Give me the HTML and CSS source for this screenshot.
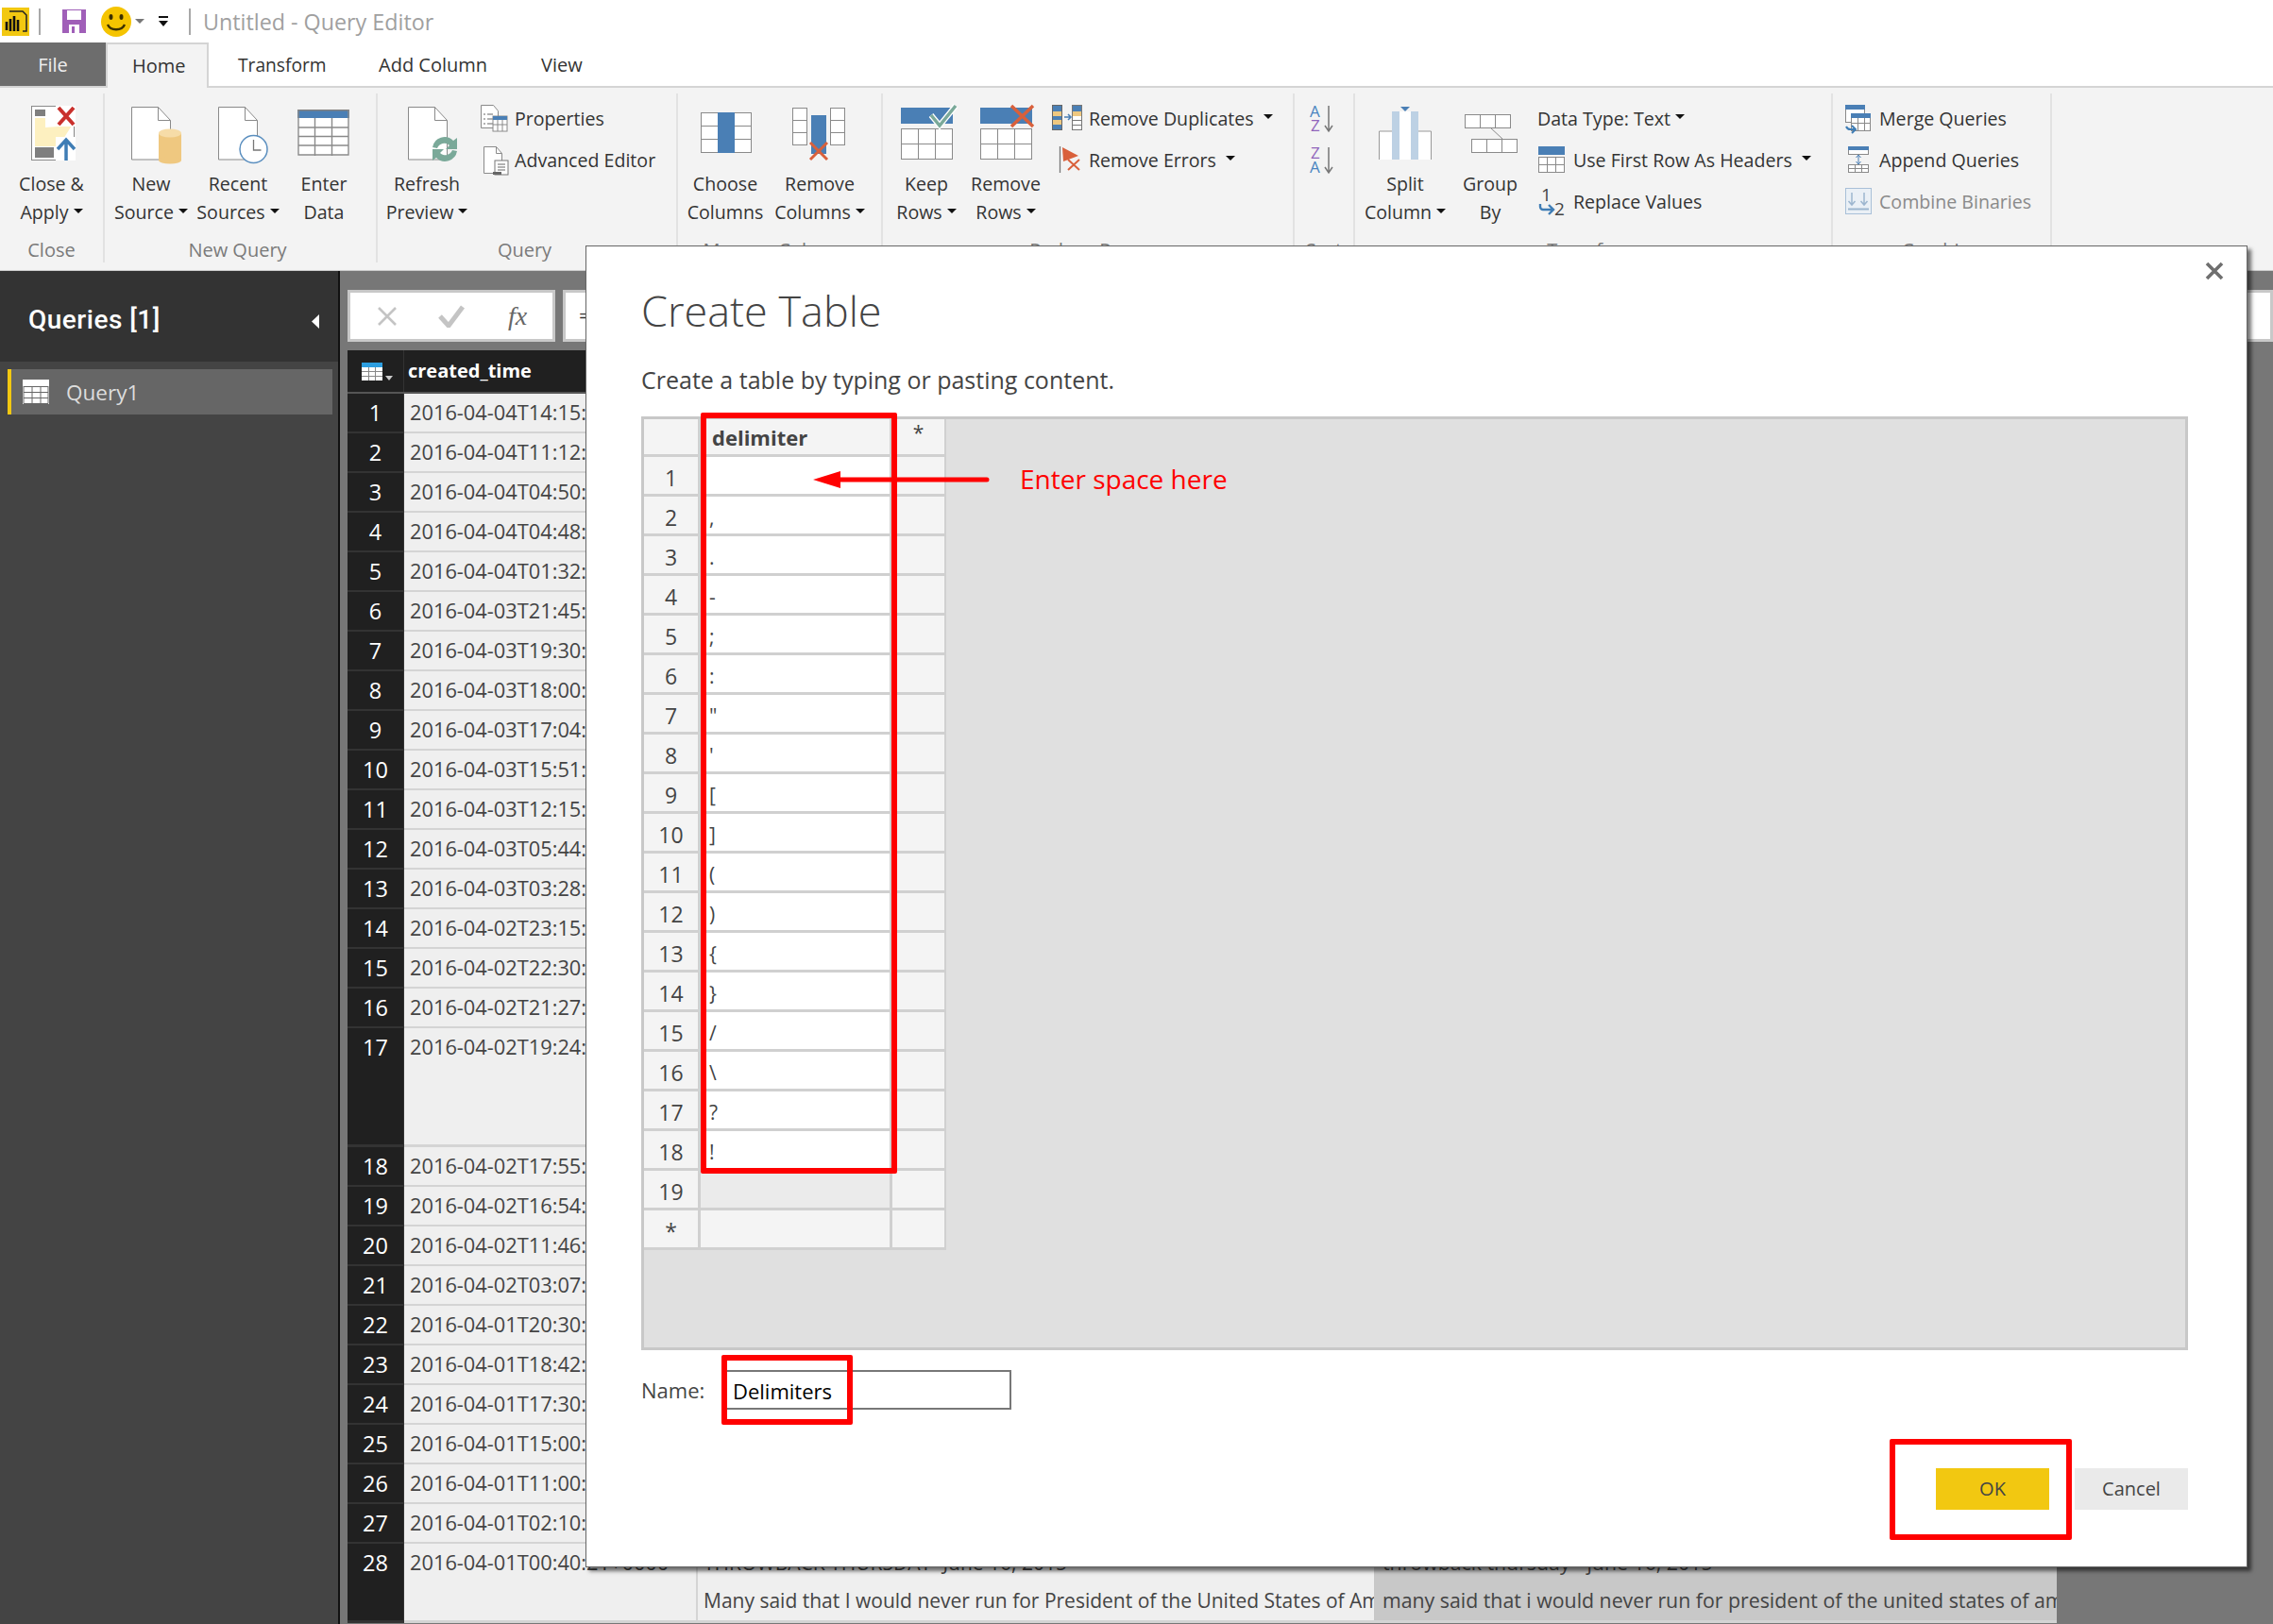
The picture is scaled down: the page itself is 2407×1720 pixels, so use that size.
FILE: index.html
```html
<!DOCTYPE html>
<html lang="en">
<head>
    <meta charset="UTF-8">
    <title>Untitled - Query Editor</title>
    <link rel="stylesheet" href="styles.css">
</head>
<body>
<div class="app">
    <div class="titlebar">
        <svg class="qa-logo" viewBox="0 0 29 30"><rect width="29" height="30" fill="#f2c811"/><path d="M8 4h14l4 4v17h-4" fill="none" stroke="#222" stroke-width="1.5"/><path d="M5 15v9M9 12v13M13 9v16M17 13v12" stroke="#111" stroke-width="2.6"/></svg>
        <span class="qa-sep"></span>
        <svg class="qa-save" viewBox="0 0 25 25"><path d="M0 0h25v25H0z" fill="#a05fb8"/><rect x="5" y="1" width="15" height="10" fill="#fff"/><rect x="7" y="16" width="11" height="9" fill="#fff"/><rect x="10" y="18" width="3" height="7" fill="#a05fb8"/></svg>
        <svg class="qa-smile" viewBox="0 0 32 32"><ellipse cx="16" cy="16" rx="16" ry="16" fill="#f5c400"/><ellipse cx="10.5" cy="11" rx="2" ry="3" fill="#3c3000"/><ellipse cx="21.5" cy="11" rx="2" ry="3" fill="#3c3000"/><path d="M7 19c3 7 15 7 18 0" fill="none" stroke="#3c3000" stroke-width="2.4"/></svg>
        <i class="caret caret-grey"></i>
        <svg class="qa-more" viewBox="0 0 12 12"><path d="M1 1h10" stroke="#111" stroke-width="2"/><path d="M1 5h10L6 11z" fill="#111"/></svg>
        <span class="qa-sep qa-sep-2"></span>
        <span class="window-title">Untitled - Query Editor</span>
    </div>

    <div class="tabs">
        <div class="tab tab-file">File</div>
        <div class="tab tab-home">Home</div>
        <div class="tab tab-transform">Transform</div>
        <div class="tab tab-add">Add Column</div>
        <div class="tab">View</div>
    </div>

    <div class="ribbon">
        <div class="group w-close">
            <div class="group-body">
                <div class="big b-109">
                    <svg class="big-icon" viewBox="19 108 70 70">
                        <rect x="32.500" y="112.500" width="45" height="57" fill="#fff" stroke="#8a8a8a"/>
                        <rect x="36" y="116" width="11" height="7" fill="#7f7f7f"/>
                        <path d="M36 125h11v10l14-1 14-1-14 22H36z" fill="#fdf0c0"/>
                        <rect x="36" y="156" width="20" height="11" fill="#7f7f7f"/>
                        <path d="M58 112h21v22H58z" fill="#fff"/>
                        <path d="M61 114l16 18M77 114l-16 18" stroke="#c9302c" stroke-width="4"/>
                        <path d="M58 145h21v25H58z" fill="#fff"/>
                        <path d="M69 148v22M60 158l9-10 9 10" fill="none" stroke="#3f7db5" stroke-width="3.500"/>
                    </svg>
                    <span class="big-label">Close &amp;<br>Apply<i class="caret"></i></span>
                </div>
            </div>
            <div class="group-label">Close</div>
        </div>

        <div class="group w-newquery">
            <div class="group-body pad-3">
                <div class="big b-92">
                    <svg class="big-icon" viewBox="125 108 70 70">
                        <path d="M139.500 113.500h28l13 14v41.500h-41z" fill="#fff" stroke="#8a8a8a"/>
                        <path d="M167.500 113.500v14h13" fill="none" stroke="#8a8a8a"/>
                        <rect x="168" y="141" width="24" height="29" fill="#efc880"/>
                        <ellipse cx="180" cy="141" rx="12" ry="4.500" fill="#f6dca8"/>
                        <ellipse cx="180" cy="170" rx="12" ry="3.500" fill="#efc880"/>
                    </svg>
                    <span class="big-label">New<br>Source<i class="caret"></i></span>
                </div>
                <div class="big b-92">
                    <svg class="big-icon" viewBox="217 108 70 70">
                        <path d="M231.500 113.500h28l13 14v41.500h-41z" fill="#fff" stroke="#8a8a8a"/>
                        <path d="M259.500 113.500v14h13" fill="none" stroke="#8a8a8a"/>
                        <circle cx="268.500" cy="158" r="14.500" fill="#fff" stroke="#5b8fbf" stroke-width="1.500"/>
                        <path d="M268.500 148v11h8" fill="none" stroke="#777" stroke-width="1.300"/>
                    </svg>
                    <span class="big-label">Recent<br>Sources<i class="caret"></i></span>
                </div>
                <div class="big b-90">
                    <svg class="big-icon" viewBox="308 108 70 70">
                        <rect x="315" y="116" width="55" height="49" fill="#fff"/>
                        <rect x="315" y="116" width="55" height="9" fill="#4a7fb5"/>
                        <rect x="315" y="116" width="55" height="1.500" fill="#808080"/>
                        <path d="M316 116v48h53v-48M316 135h53M316 144.500h53M316 154h53M333.500 125v40M351.500 125v40" fill="none" stroke="#8a8a8a" stroke-width="1.400"/>
                    </svg>
                    <span class="big-label">Enter<br>Data</span>
                </div>
            </div>
            <div class="group-label label-left-6">New Query</div>
        </div>

        <div class="group w-query">
            <div class="group-body">
                <div class="big b-104">
                    <svg class="big-icon" viewBox="417 108 70 70">
                        <path d="M432.500 113.500h28l13 14v41.500h-41z" fill="#fff" stroke="#8a8a8a"/>
                        <path d="M460.500 113.500v14h13" fill="none" stroke="#8a8a8a"/>
                        <path d="M458 156a13 13 0 0 1 22-7l4-3v12h-12l4-4a8 8 0 0 0-13 3zM484 160a13 13 0 0 1-22 7l-4 3v-12h12l-4 4a8 8 0 0 0 13-3z" fill="#7aa999"/>
                    </svg>
                    <span class="big-label">Refresh<br>Preview<i class="caret"></i></span>
                </div>
                <div class="small-col ml-2">
                    <div class="small">
                        <svg class="small-icon" viewBox="506 111 32 32">
                            <path d="M509.500 111.500h13l5 6v18h-18z" fill="#fff" stroke="#8a8a8a"/>
                            <path d="M512 121h2M516 121h6M512 126h2M516 126h6M512 131h2M516 131h6" stroke="#666"/>
                            <rect x="522" y="123" width="15" height="16" fill="#fff" stroke="#8a8a8a"/>
                            <rect x="522" y="123" width="15" height="4" fill="#4a7fb5"/>
                            <path d="M522 132h15M527 127v12M532 127v12" stroke="#8a8a8a"/>
                        </svg>
                        <span>Properties</span>
                    </div>
                    <div class="small">
                        <svg class="small-icon" viewBox="506 155 32 32">
                            <path d="M512.500 155.500h13l6 7v21h-19z" fill="#fff" stroke="#8a8a8a"/>
                            <path d="M525.500 155.500v7h6" fill="none" stroke="#8a8a8a"/>
                            <rect x="524" y="170" width="14" height="15" fill="#fff" stroke="#777"/>
                            <path d="M527 174h8M527 177h8M527 180h8" stroke="#666"/>
                            <rect x="522" y="182" width="9" height="3" fill="#666"/>
                        </svg>
                        <span>Advanced Editor</span>
                    </div>
                </div>
            </div>
            <div class="group-label label-left-5">Query</div>
        </div>

        <div class="group w-manage">
            <div class="group-body">
                <div class="big b-100">
                    <svg class="big-icon" viewBox="733 108 70 70">
                        <rect x="742.500" y="119.500" width="53" height="42" fill="#fff" stroke="#8a8a8a"/>
                        <path d="M742 133.500h54M742 147.500h54" stroke="#8a8a8a"/>
                        <rect x="760" y="119" width="18" height="43" fill="#4a7fb5"/>
                    </svg>
                    <span class="big-label">Choose<br>Columns</span>
                </div>
                <div class="big b-100">
                    <svg class="big-icon" viewBox="833 108 70 70">
                        <rect x="839.500" y="114.500" width="15" height="39" fill="#fff" stroke="#8a8a8a"/>
                        <path d="M839 127.500h16M839 140.500h16" stroke="#8a8a8a"/>
                        <rect x="879.500" y="114.500" width="15" height="39" fill="#fff" stroke="#8a8a8a"/>
                        <path d="M879 127.500h16M879 140.500h16" stroke="#8a8a8a"/>
                        <rect x="859" y="122" width="16" height="41" fill="#4a7fb5"/>
                        <path d="M858 151l18 18M876 151l-18 18" stroke="#d9603b" stroke-width="3"/>
                    </svg>
                    <span class="big-label">Remove<br>Columns<i class="caret"></i></span>
                </div>
            </div>
            <div class="group-label">Manage Columns</div>
        </div>

        <div class="group w-reduce">
            <div class="group-body">
                <div class="big b-92">
                    <svg class="big-icon" viewBox="946 108 70 70">
                        <rect x="954" y="114" width="55" height="17" fill="#4a7fb5"/>
                        <rect x="954.500" y="136.500" width="54" height="32" fill="#fff" stroke="#8a8a8a"/>
                        <path d="M954 152.500h55M972.500 136v33M990.500 136v33" stroke="#8a8a8a"/>
                        <path d="M986 122l9 11 17-21" fill="none" stroke="#fff" stroke-width="6"/>
                        <path d="M986 122l9 11 17-21" fill="none" stroke="#7aa999" stroke-width="3.500"/>
                    </svg>
                    <span class="big-label">Keep<br>Rows<i class="caret"></i></span>
                </div>
                <div class="big b-76">
                    <svg class="big-icon" viewBox="1030 108 70 70">
                        <rect x="1038" y="114" width="55" height="17" fill="#4a7fb5"/>
                        <rect x="1038.500" y="136.500" width="54" height="32" fill="#fff" stroke="#8a8a8a"/>
                        <path d="M1038 152.500h55M1056.500 136v33M1074.500 136v33" stroke="#8a8a8a"/>
                        <path d="M1071 112l23 22M1094 112l-23 22" stroke="#d9603b" stroke-width="3.500"/>
                    </svg>
                    <span class="big-label">Remove<br>Rows<i class="caret"></i></span>
                </div>
                <div class="small-col ml-11">
                    <div class="small">
                        <svg class="small-icon" viewBox="1114 111 32 32">
                            <rect x="1114.500" y="111.500" width="10" height="26" fill="#4a7fb5" stroke="#666"/>
                            <rect x="1115" y="118" width="9" height="5" fill="#efc880"/>
                            <rect x="1115" y="127" width="9" height="5" fill="#efc880"/>
                            <rect x="1135.500" y="111.500" width="10" height="26" fill="#fff" stroke="#777"/>
                            <rect x="1136" y="112" width="9" height="6" fill="#4a7fb5"/>
                            <rect x="1136" y="118" width="9" height="5" fill="#efc880"/>
                            <path d="M1136 127.500h9M1136 132.500h9" stroke="#777"/>
                            <path d="M1127 124h6M1131 121l3 3-3 3" fill="none" stroke="#4a7fb5" stroke-width="1.500"/>
                        </svg>
                        <span>Remove Duplicates</span>
                        <i class="caret caret-far"></i>
                    </div>
                    <div class="small">
                        <svg class="small-icon" viewBox="1114 155 32 32">
                            <path d="M1122.500 155v28" stroke="#777" stroke-width="1.300"/>
                            <path d="M1125 156l17 9-16 6z" fill="#d9603b"/>
                            <path d="M1131 169l12 11M1143 169l-12 11" stroke="#d9603b" stroke-width="2"/>
                        </svg>
                        <span>Remove Errors</span>
                        <i class="caret caret-far"></i>
                    </div>
                </div>
            </div>
            <div class="group-label">Reduce Rows</div>
        </div>

        <div class="group w-sort">
            <div class="group-body">
                <div class="small-col ml-14">
                    <div class="small">
                        <svg class="small-icon" viewBox="1385 111 32 32">
                            <text class="sort-letter" x="1387" y="124" fill="#4a85c0">A</text>
                            <text class="sort-letter" x="1388" y="139" fill="#9065bb">Z</text>
                            <path d="M1407 112v26M1403 133l4 6 4-6" fill="none" stroke="#777" stroke-width="1.500"/>
                        </svg>
                    </div>
                    <div class="small">
                        <svg class="small-icon" viewBox="1385 155 32 32">
                            <text class="sort-letter" x="1388" y="168" fill="#9065bb">Z</text>
                            <text class="sort-letter" x="1387" y="183" fill="#4a85c0">A</text>
                            <path d="M1407 156v26M1403 177l4 6 4-6" fill="none" stroke="#777" stroke-width="1.500"/>
                        </svg>
                    </div>
                </div>
            </div>
            <div class="group-label">Sort</div>
        </div>

        <div class="group w-transform">
            <div class="group-body">
                <div class="big b-106">
                    <svg class="big-icon" viewBox="1453 108 70 70">
                        <path d="M1460 139h14v30h-14zM1502 139h14v30h-14zM1482 118h12v51h-12z" fill="#fff"/>
                        <path d="M1460.500 169v-30h14M1515.500 169v-30h-14" fill="none" stroke="#999"/>
                        <rect x="1474" y="118" width="8" height="51" fill="#bdd1e4"/>
                        <rect x="1494" y="118" width="8" height="51" fill="#bdd1e4"/>
                        <path d="M1483 113h10l-5 5z" fill="#4a7fb5"/>
                    </svg>
                    <span class="big-label">Split<br>Column<i class="caret"></i></span>
                </div>
                <div class="big b-74">
                    <svg class="big-icon" viewBox="1543 108 70 70">
                        <rect x="1551.500" y="121.500" width="48" height="14" fill="#fff" stroke="#8a8a8a"/>
                        <path d="M1567.500 121v14M1583.500 121v14" stroke="#8a8a8a"/>
                        <rect x="1558.500" y="147.500" width="48" height="14" fill="#fff" stroke="#8a8a8a"/>
                        <path d="M1574.500 147v14M1590.500 147v14M1578 135l13 12" stroke="#8a8a8a"/>
                    </svg>
                    <span class="big-label">Group<br>By</span>
                </div>
                <div class="small-col ml-12">
                    <div class="small small-plain">
                        <span>Data Type: Text</span>
                        <i class="caret"></i>
                    </div>
                    <div class="small">
                        <svg class="small-icon" viewBox="1627 155 32 32">
                            <rect x="1629" y="155" width="28" height="9" fill="#4a7fb5"/>
                            <rect x="1629.500" y="166.500" width="27" height="16" fill="#fff" stroke="#8a8a8a"/>
                            <path d="M1629 174.500h28M1638.500 166v17M1647.500 166v17" stroke="#8a8a8a"/>
                        </svg>
                        <span>Use First Row As Headers</span>
                        <i class="caret caret-far"></i>
                    </div>
                    <div class="small">
                        <svg class="small-icon" viewBox="1627 199 32 32">
                            <text class="replace-digit" x="1632" y="213">1</text>
                            <text class="replace-digit" x="1646" y="228">2</text>
                            <path d="M1631 216v3a3 3 0 0 0 3 3h10M1640 217l5 5-5 5" fill="none" stroke="#3f7db5" stroke-width="2.400"/>
                        </svg>
                        <span>Replace Values</span>
                    </div>
                </div>
            </div>
            <div class="group-label">Transform</div>
        </div>

        <div class="group w-combine">
            <div class="group-body">
                <div class="small-col ml-10">
                    <div class="small">
                        <svg class="small-icon" viewBox="1951 111 32 32">
                            <rect x="1954.500" y="111.500" width="20" height="18" fill="#fff" stroke="#8a8a8a"/>
                            <rect x="1954" y="111" width="21" height="5" fill="#4a7fb5"/>
                            <rect x="1960.500" y="120.500" width="20" height="18" fill="#fff" stroke="#8a8a8a"/>
                            <rect x="1960" y="120" width="21" height="5" fill="#4a7fb5"/>
                            <path d="M1960 130.500h21M1967.500 125v14M1974.500 125v14" stroke="#8a8a8a"/>
                            <path d="M1955 134a5 5 0 0 0 5 3h4M1961 133l4 4-4 4" fill="none" stroke="#3f7db5" stroke-width="2"/>
                        </svg>
                        <span>Merge Queries</span>
                    </div>
                    <div class="small">
                        <svg class="small-icon" viewBox="1951 155 32 32">
                            <rect x="1957.500" y="155.500" width="21" height="8" fill="#fff" stroke="#8a8a8a"/>
                            <rect x="1957" y="155" width="22" height="4" fill="#4a7fb5"/>
                            <path d="M1968 165v8M1965.500 167l2.500-3 2.500 3M1965.500 171l2.500 3 2.500-3" fill="none" stroke="#4a7fb5"/>
                            <rect x="1957.500" y="174.500" width="21" height="8" fill="#fff" stroke="#8a8a8a"/>
                            <path d="M1957 178.500h22M1964.500 174v9M1971.500 174v9" stroke="#8a8a8a"/>
                        </svg>
                        <span>Append Queries</span>
                    </div>
                    <div class="small small-off">
                        <svg class="small-icon" viewBox="1951 199 32 32">
                            <rect x="1954.500" y="199.500" width="27" height="27" fill="#eaf0f6" stroke="#a9c0d8"/>
                            <path d="M1961 204v13M1957.500 213l3.500 4 3.500-4M1974 204v13M1970.500 213l3.500 4 3.500-4" fill="none" stroke="#9db6cf" stroke-width="1.500"/>
                            <path d="M1957 221.500h22" stroke="#9db6cf" stroke-width="2"/>
                        </svg>
                        <span>Combine Binaries</span>
                    </div>
                </div>
            </div>
            <div class="group-label">Combine</div>
        </div>
    </div>

    <div class="workspace">
        <aside class="queries">
            <div class="queries-head">
                <span class="queries-title">Queries [1]</span>
                <svg class="queries-collapse" viewBox="0 0 8 15"><path d="M8 0v15L0 7.500z" fill="#fff"/></svg>
            </div>
            <div class="query-item">
                <svg class="query-icon" viewBox="0 0 28 26"><rect width="28" height="26" fill="#fff"/><path d="M1 7.500h26M1 13.500h26M1 19.500h26M1 7v18.500h26V7M10 7v19M19 7v19" fill="none" stroke="#666"/></svg>
                <span>Query1</span>
            </div>
        </aside>

        <main class="main">
            <div class="formula-bar">
                <div class="formula-tools">
                    <svg class="tool-icon" viewBox="0 0 20 20"><path d="M1 1l18 18M19 1L1 19" stroke="#c4c4c4" stroke-width="2.600"/></svg>
                    <svg class="tool-icon" viewBox="0 0 28 24"><path d="M2 12l9 10L26 2" fill="none" stroke="#c4c4c4" stroke-width="5"/></svg>
                    <span class="fx">fx</span>
                </div>
                <div class="formula-input">=</div>
            </div>

            <div class="data-table">
                <div class="row row-head">
                    <div class="num">
                        <svg class="table-menu" viewBox="0 0 34 20"><rect width="22" height="19" fill="#fff"/><rect width="22" height="5" fill="#2d9ee0"/><path d="M0 9.500h22M0 14.500h22M7.500 5v14M14.500 5v14" stroke="#888"/><path d="M25 14h8l-4 5z" fill="#ccc"/></svg>
                    </div>
                    <div class="head-cell">created_time</div>
                </div>
                <div class="row"><div class="num">1</div><div class="cell">2016-04-04T14:15:38+0000</div></div>
                <div class="row"><div class="num">2</div><div class="cell">2016-04-04T11:12:10+0000</div></div>
                <div class="row"><div class="num">3</div><div class="cell">2016-04-04T04:50:02+0000</div></div>
                <div class="row"><div class="num">4</div><div class="cell">2016-04-04T04:48:41+0000</div></div>
                <div class="row"><div class="num">5</div><div class="cell">2016-04-04T01:32:15+0000</div></div>
                <div class="row"><div class="num">6</div><div class="cell">2016-04-03T21:45:09+0000</div></div>
                <div class="row"><div class="num">7</div><div class="cell">2016-04-03T19:30:27+0000</div></div>
                <div class="row"><div class="num">8</div><div class="cell">2016-04-03T18:00:33+0000</div></div>
                <div class="row"><div class="num">9</div><div class="cell">2016-04-03T17:04:50+0000</div></div>
                <div class="row"><div class="num">10</div><div class="cell">2016-04-03T15:51:12+0000</div></div>
                <div class="row"><div class="num">11</div><div class="cell">2016-04-03T12:15:44+0000</div></div>
                <div class="row"><div class="num">12</div><div class="cell">2016-04-03T05:44:06+0000</div></div>
                <div class="row"><div class="num">13</div><div class="cell">2016-04-03T03:28:19+0000</div></div>
                <div class="row"><div class="num">14</div><div class="cell">2016-04-02T23:15:31+0000</div></div>
                <div class="row"><div class="num">15</div><div class="cell">2016-04-02T22:30:58+0000</div></div>
                <div class="row"><div class="num">16</div><div class="cell">2016-04-02T21:27:03+0000</div></div>
                <div class="row row-tall"><div class="num">17</div><div class="cell">2016-04-02T19:24:47+0000</div></div>
                <div class="row"><div class="num">18</div><div class="cell">2016-04-02T17:55:20+0000</div></div>
                <div class="row"><div class="num">19</div><div class="cell">2016-04-02T16:54:36+0000</div></div>
                <div class="row"><div class="num">20</div><div class="cell">2016-04-02T11:46:11+0000</div></div>
                <div class="row"><div class="num">21</div><div class="cell">2016-04-02T03:07:25+0000</div></div>
                <div class="row"><div class="num">22</div><div class="cell">2016-04-01T20:30:49+0000</div></div>
                <div class="row"><div class="num">23</div><div class="cell">2016-04-01T18:42:14+0000</div></div>
                <div class="row"><div class="num">24</div><div class="cell">2016-04-01T17:30:08+0000</div></div>
                <div class="row"><div class="num">25</div><div class="cell">2016-04-01T15:00:52+0000</div></div>
                <div class="row"><div class="num">26</div><div class="cell">2016-04-01T11:00:37+0000</div></div>
                <div class="row"><div class="num">27</div><div class="cell">2016-04-01T02:10:29+0000</div></div>
                <div class="row row-last">
                    <div class="num">28</div>
                    <div class="cell">2016-04-01T00:40:21+0000</div>
                    <div class="cell cell-text">THROWBACK THURSDAY- June 16, 2015<br>Many said that I would never run for President of the United States of America</div>
                    <div class="cell cell-text cell-selected">throwback thursday - june 16, 2015<br>many said that i would never run for president of the united states of america</div>
                </div>
            </div>
        </main>
    </div>

    <div class="dialog">
        <svg class="dialog-close" viewBox="0 0 20 20"><path d="M2 2l16 16M18 2L2 18" stroke="#6f6f6f" stroke-width="3.600"/></svg>
        <h1 class="dialog-title">Create Table</h1>
        <p class="dialog-sub">Create a table by typing or pasting content.</p>

        <div class="sheet">
            <div class="sheet-row sheet-head"><div class="sh-num"></div><div class="sh-val">delimiter</div><div class="sh-add">*</div></div>
            <div class="sheet-row"><div class="sh-num">1</div><div class="sh-val"></div><div class="sh-add"></div></div>
            <div class="sheet-row"><div class="sh-num">2</div><div class="sh-val">,</div><div class="sh-add"></div></div>
            <div class="sheet-row"><div class="sh-num">3</div><div class="sh-val">.</div><div class="sh-add"></div></div>
            <div class="sheet-row"><div class="sh-num">4</div><div class="sh-val">-</div><div class="sh-add"></div></div>
            <div class="sheet-row"><div class="sh-num">5</div><div class="sh-val">;</div><div class="sh-add"></div></div>
            <div class="sheet-row"><div class="sh-num">6</div><div class="sh-val">:</div><div class="sh-add"></div></div>
            <div class="sheet-row"><div class="sh-num">7</div><div class="sh-val">"</div><div class="sh-add"></div></div>
            <div class="sheet-row"><div class="sh-num">8</div><div class="sh-val">'</div><div class="sh-add"></div></div>
            <div class="sheet-row"><div class="sh-num">9</div><div class="sh-val">[</div><div class="sh-add"></div></div>
            <div class="sheet-row"><div class="sh-num">10</div><div class="sh-val">]</div><div class="sh-add"></div></div>
            <div class="sheet-row"><div class="sh-num">11</div><div class="sh-val">(</div><div class="sh-add"></div></div>
            <div class="sheet-row"><div class="sh-num">12</div><div class="sh-val">)</div><div class="sh-add"></div></div>
            <div class="sheet-row"><div class="sh-num">13</div><div class="sh-val">{</div><div class="sh-add"></div></div>
            <div class="sheet-row"><div class="sh-num">14</div><div class="sh-val">}</div><div class="sh-add"></div></div>
            <div class="sheet-row"><div class="sh-num">15</div><div class="sh-val">/</div><div class="sh-add"></div></div>
            <div class="sheet-row"><div class="sh-num">16</div><div class="sh-val">\</div><div class="sh-add"></div></div>
            <div class="sheet-row"><div class="sh-num">17</div><div class="sh-val">?</div><div class="sh-add"></div></div>
            <div class="sheet-row"><div class="sh-num">18</div><div class="sh-val">!</div><div class="sh-add"></div></div>
            <div class="sheet-row"><div class="sh-num">19</div><div class="sh-val sh-empty"></div><div class="sh-add"></div></div>
            <div class="sheet-row sheet-new"><div class="sh-num">*</div><div class="sh-val"></div><div class="sh-add"></div></div>
        </div>

        <div class="name-row">
            <label class="name-label">Name:</label>
            <div class="name-input">Delimiters</div>
        </div>

        <div class="dialog-buttons">
            <div class="btn btn-ok">OK</div>
            <div class="btn">Cancel</div>
        </div>

        <!-- red markup drawn over the dialog -->
        <div class="mark mark-col"></div>
        <div class="mark mark-name"></div>
        <div class="mark mark-ok"></div>
        <svg class="mark-arrow" viewBox="0 0 187 20"><path d="M0 10L29 1v18z" fill="#f00"/><path d="M25 10h159" stroke="#f00" stroke-width="5" stroke-linecap="round"/></svg>
        <span class="mark-text">Enter space here</span>
    </div>
</div>
</body>
</html>
```

FILE: styles.css
```css
html, body {
    margin: 0;
    height: 100%;
    overflow: hidden;
}

body {
    font-family: "Open Sans", "Noto Sans", sans-serif;
    color: #333;
    background-color: #fff;
}

.app {
    position: relative;
    display: flex;
    flex-direction: column;
    height: 100vh;
    overflow: hidden;
}

/* title bar */
.titlebar {
    display: flex;
    align-items: center;
    height: 45px;
    flex: none;
}

.qa-logo {
    width: 29px;
    height: 30px;
    margin-left: 2px;
}

.qa-sep {
    width: 2px;
    height: 28px;
    margin-left: 10px;
    background-color: #a8a8a8;
}

.qa-sep-2 {
    margin-left: 21px;
}

.qa-save {
    width: 25px;
    height: 25px;
    margin-left: 23px;
}

.qa-smile {
    width: 32px;
    height: 32px;
    margin-left: 16px;
}

.qa-more {
    width: 12px;
    height: 12px;
    margin-left: 14px;
}

.window-title {
    margin-left: 13px;
    font-size: 23.300px;
    color: #a0a0a0;
}

/* tabs */
.tabs {
    display: flex;
    flex: none;
    height: 48px;
    box-sizing: border-box;
    border-bottom: 2px solid #d4d4d4;
    font-size: 20px;
}

.tab {
    height: 46px;
    line-height: 48px;
}

.tab-file {
    width: 112px;
    text-align: center;
    color: #eee;
    background-color: #6d6d6d;
}

.tab-home {
    width: 109px;
    height: 48px;
    box-sizing: border-box;
    padding-left: 26px;
    border: 2px solid #d4d4d4;
    border-bottom: none;
    background-color: #f3f3f3;
    line-height: 46px;
}

.tab-transform {
    margin-left: 31px;
    width: 149px;
    font-size: 19.200px;
}

.tab-add {
    width: 172px;
}

/* ribbon */
.ribbon {
    display: flex;
    flex: none;
    height: 194px;
    box-sizing: border-box;
    padding-top: 6px;
    background-color: #f3f3f3;
    border-bottom: 1px solid #ccc;
    font-size: 19.600px;
}

.group {
    display: flex;
    flex-direction: column;
    height: 179px;
    box-sizing: border-box;
    border-right: 2px solid #e2e2e2;
}

.w-close { width: 111px; }
.w-newquery { width: 289px; }
.w-query { width: 318px; }
.w-manage { width: 217px; }
.w-reduce { width: 436px; }
.w-sort { width: 64px; }
.w-transform { width: 506px; }
.w-combine { width: 232px; }

.group-body {
    display: flex;
    flex: 1;
    padding-top: 6px;
}

.pad-3 { padding-left: 3px; }

.group-label {
    height: 26px;
    line-height: 26px;
    text-align: center;
    font-size: 20px;
    color: #7a7a7a;
}

.label-left-6 { padding-right: 6px; }
.label-left-5 { padding-right: 5px; }

.big {
    display: flex;
    flex-direction: column;
    align-items: center;
    flex: none;
    padding-top: 3px;
}

.b-109 { width: 109px; }
.b-106 { width: 106px; }
.b-104 { width: 104px; }
.b-100 { width: 100px; }
.b-92 { width: 92px; }
.b-90 { width: 90px; }
.b-76 { width: 76px; }
.b-74 { width: 74px; }

.big-icon {
    width: 70px;
    height: 70px;
    flex: none;
}

.big-label {
    margin-top: 2px;
    line-height: 30px;
    text-align: center;
    white-space: nowrap;
}

.caret {
    display: inline-block;
    margin-left: 5px;
    border-left: 5px solid transparent;
    border-right: 5px solid transparent;
    border-top: 5px solid #111;
    vertical-align: 6px;
}

.caret-grey {
    margin-left: 4px;
    border-top-color: #777;
}

.caret-far {
    margin-left: 10px;
}

.small-col {
    display: flex;
    flex-direction: column;
}

.ml-2 { margin-left: 2px; }
.ml-10 { margin-left: 10px; }
.ml-11 { margin-left: 11px; }
.ml-12 { margin-left: 12px; }
.ml-14 { margin-left: 14px; }

.small {
    display: flex;
    align-items: center;
    height: 44px;
    white-space: nowrap;
}

.small span {
    padding-bottom: 3px;
}

.small .caret {
    align-self: center;
    margin-top: -8px;
}

.small-plain {
    padding-left: 1px;
}

.small-off {
    color: #8a8a8a;
}

.small-icon {
    width: 32px;
    height: 32px;
    margin-right: 7px;
    flex: none;
    overflow: visible;
}

.sort-letter {
    font-size: 17px;
}

.replace-digit {
    font-size: 19px;
    fill: #444;
}

/* lower part */
.workspace {
    display: flex;
    flex: 1;
    min-height: 0;
}

.queries {
    flex: none;
    width: 360px;
    box-sizing: border-box;
    border-right: 2px solid #111;
    background-color: #444;
}

.queries-head {
    display: flex;
    align-items: center;
    justify-content: space-between;
    height: 96px;
    box-sizing: border-box;
    padding: 6px 20px 0 30px;
    background-color: #333;
}

.queries-title {
    font-family: Roboto, sans-serif;
    font-weight: 500;
    font-size: 28px;
    letter-spacing: 0.5px;
    color: #fff;
}

.queries-collapse {
    width: 8px;
    height: 15px;
    margin-top: 4px;
}

.query-item {
    display: flex;
    align-items: center;
    width: 344px;
    height: 48px;
    box-sizing: border-box;
    margin: 8px 0 0 8px;
    padding-left: 12px;
    border-left: 4px solid #f2c811;
    background-color: #666;
    font-size: 22.500px;
    color: #ddd;
}

.query-icon {
    width: 28px;
    height: 26px;
    margin-right: 18px;
}

.main {
    flex: 1;
    min-width: 0;
    padding: 20px 0 0 8px;
    background-color: #777;
}

.formula-bar {
    display: flex;
    gap: 8px;
    height: 55px;
}

.formula-tools {
    display: flex;
    align-items: center;
    width: 220px;
    box-sizing: border-box;
    border: 3px solid #c8c8c8;
    background-color: #fff;
}

.tool-icon {
    width: 20px;
    height: 20px;
    margin-left: 29px;
}

.tool-icon + .tool-icon {
    width: 28px;
    height: 24px;
    margin-left: 44px;
}

.fx {
    margin-left: 46px;
    font-family: "Liberation Serif", serif;
    font-style: italic;
    font-size: 28px;
    color: #666;
}

.formula-input {
    flex: 1;
    box-sizing: border-box;
    padding-left: 14px;
    border: 3px solid #c8c8c8;
    background-color: #fff;
    font-size: 22px;
    line-height: 46px;
}

.data-table {
    margin-top: 9px;
}

.row {
    display: grid;
    grid-template-columns: 60px 309px 718px 723px;
    height: 42px;
}

.row-head {
    height: 46px;
    background-color: #202020;
    border-bottom: 2px solid #555;
    box-sizing: border-box;
    width: 369px;
}

.row-tall { height: 126px; }
.row-last { height: 84px; }

.num {
    box-sizing: border-box;
    border-bottom: 3px solid #333;
    background-color: #202020;
    border-right: 1px solid #333;
    font-size: 23.500px;
    line-height: 40px;
    text-align: center;
    color: #fff;
}

.row-head .num {
    border-bottom: none;
}

.table-menu {
    display: block;
    width: 34px;
    height: 20px;
    margin: 13px 0 0 15px;
}

.head-cell {
    padding-left: 4px;
    font-size: 20px;
    font-weight: 700;
    line-height: 44px;
    color: #fff;
}

.cell {
    box-sizing: border-box;
    padding-left: 6px;
    border-bottom: 3px solid #d4d4d4;
    background-color: #efefef;
    font-size: 21.800px;
    line-height: 40px;
    color: #444;
    white-space: nowrap;
    overflow: hidden;
}

.cell-text {
    border-left: 2px solid #d4d4d4;
    font-size: 21px;
}

.cell-selected {
    background-color: #c8c8c8;
    border-left: none;
    padding-left: 9px;
    font-size: 21.300px;
}

/* dialog */
.dialog {
    position: absolute;
    left: 620px;
    top: 260px;
    width: 1760px;
    height: 1400px;
    box-sizing: border-box;
    padding: 0 62px 0 58px;
    border: 1px solid #666;
    background-color: #fff;
    box-shadow: 4px 4px 4px rgba(0,0,0,0.55);
}

.dialog-close {
    position: absolute;
    left: 1714px;
    top: 16px;
    width: 20px;
    height: 20px;
}

.dialog-title {
    margin: 38px 0 0;
    font-size: 45px;
    font-weight: 300;
    line-height: 60px;
    color: #444;
}

.dialog-sub {
    margin: 28px 0 0;
    font-size: 25px;
    line-height: 30px;
    color: #444;
}

.sheet {
    height: 989px;
    box-sizing: border-box;
    margin-top: 24px;
    border: 3px solid #c8c8c8;
    background-color: #e0e0e0;
}

.sheet-row {
    display: grid;
    grid-template-columns: 57px 200px 55px;
    grid-template-rows: 39px;
    gap: 0 3px;
    width: 320px;
    height: 42px;
    box-sizing: border-box;
    border-bottom: 3px solid #d0d0d0;
    border-right: 2px solid #d0d0d0;
    background-color: #d0d0d0;
}

.sheet-head {
    height: 40px;
    grid-template-rows: 37px;
}

.sh-num {
    box-sizing: border-box;
    padding-top: 5px;
    background-color: #f4f4f4;
    font-size: 23px;
    line-height: 34px;
    text-align: center;
    color: #444;
}

.sh-val {
    box-sizing: border-box;
    padding: 6px 0 0 9px;
    background-color: #fff;
    font-size: 21px;
    line-height: 33px;
    color: #444;
}

.sh-add {
    background-color: #f4f4f4;
    font-size: 21px;
    line-height: 28px;
    text-align: center;
    color: #444;
}

.sheet-head .sh-val {
    padding: 1px 0 0 12px;
    background-color: #f4f4f4;
    font-size: 22px;
    font-weight: 700;
    line-height: 36px;
}

.sh-empty {
    background-color: #ebebeb;
}

.sheet-new .sh-val {
    background-color: #f4f4f4;
}

.name-row {
    display: flex;
    align-items: center;
    margin-top: 21px;
    height: 42px;
}

.name-label {
    width: 85px;
    font-size: 22px;
    color: #444;
}

.name-input {
    width: 307px;
    height: 42px;
    box-sizing: border-box;
    padding-left: 10px;
    border: 2px solid #777;
    font-size: 22px;
    line-height: 40px;
    color: #000;
}

.dialog-buttons {
    display: flex;
    justify-content: flex-end;
    gap: 27px;
    margin-top: 62px;
}

.btn {
    width: 120px;
    height: 44px;
    background-color: #eaeaea;
    font-size: 20px;
    line-height: 44px;
    text-align: center;
    color: #444;
}

.btn-ok {
    background-color: #f2c811;
}

/* annotations */
.mark {
    position: absolute;
    box-sizing: border-box;
    border: 6px solid #f00;
    border-radius: 2px;
}

.mark-col {
    left: 121px;
    top: 176px;
    width: 208px;
    height: 806px;
}

.mark-name {
    left: 143px;
    top: 1174px;
    width: 139px;
    height: 74px;
}

.mark-ok {
    left: 1380px;
    top: 1263px;
    width: 193px;
    height: 107px;
}

.mark-arrow {
    position: absolute;
    left: 240px;
    top: 237px;
    width: 187px;
    height: 20px;
}

.mark-text {
    position: absolute;
    left: 459px;
    top: 226px;
    font-size: 28px;
    line-height: 40px;
    color: #f00;
}
```
